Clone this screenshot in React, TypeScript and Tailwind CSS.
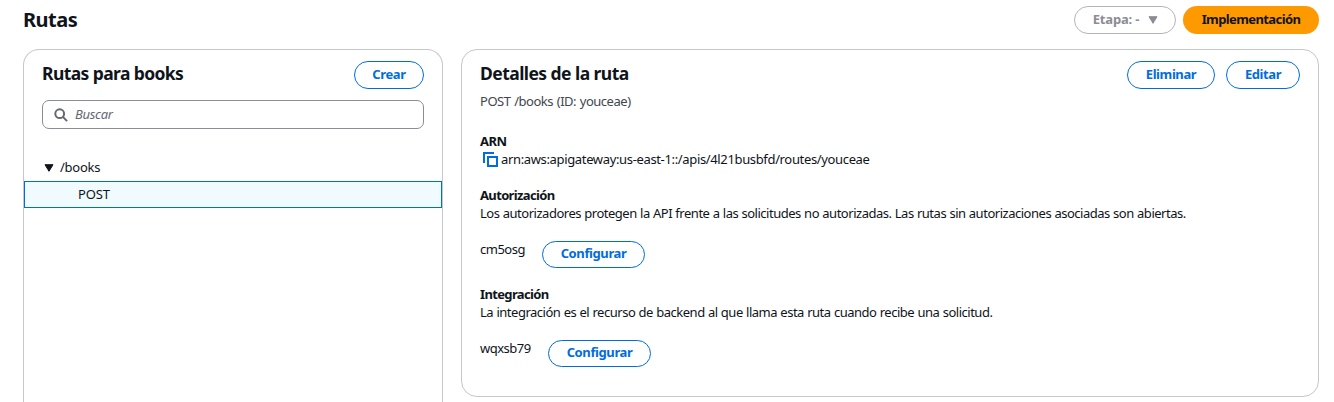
import type { ReactNode } from "react";

function PillButton({ children, className = "" }: { children: ReactNode; className?: string }) {
  return (
    <button
      type="button"
      className={`flex shrink-0 items-center justify-center rounded-full border-[1.5px] border-[#006ce0] bg-white font-bold tracking-[-0.4px] text-[#006ce0] ${className}`}
    >
      {children}
    </button>
  );
}

function Caret({ className = "" }: { className?: string }) {
  return (
    <svg viewBox="0 0 10 8" className={`shrink-0 ${className}`} fill="currentColor" stroke="currentColor" strokeWidth="1" strokeLinejoin="round">
      <path d="M1 .7h8L5 7.3z" />
    </svg>
  );
}

function TopBar() {
  return (
    <header className="flex h-[34px] items-end justify-between">
      <h1 className="text-[20px] leading-[28px] font-bold tracking-[-0.5px]">Rutas</h1>
      <div className="flex gap-[7px]">
        <button
          type="button"
          disabled
          className="flex h-7 w-[102px] items-center rounded-full border border-[#b4b4bb] bg-white pl-[17px] font-bold tracking-[-0.15px] text-[#8c8c94]"
        >
          <span className="w-[48px] pb-0.5">Etapa: -</span>
          <Caret className="ml-[8px] h-2 w-2.5" />
        </button>
        <button type="button" className="h-7 w-[136px] rounded-full bg-[#ff9900] pb-0.5 font-bold tracking-[-0.6px]">
          Implementación
        </button>
      </div>
    </header>
  );
}

function RouteTree() {
  return (
    <section className="h-[370px] w-[420px] shrink-0 rounded-t-2xl border border-b-0 border-[#c6c6cd]">
      <div className="mt-[11px] flex h-7 items-center justify-between px-[18px]">
        <h2 className="pb-1 text-[17.5px] leading-6 font-bold tracking-[-0.6px]">Rutas para books</h2>
        <PillButton className="h-7 w-[70px] pb-0.5">Crear</PillButton>
      </div>
      <div className="mx-[18px] mt-[11px] flex h-[29px] items-center rounded-[7px] border border-[#8c8c94] pl-[11px]">
        <svg viewBox="0 0 14 14" className="h-3.5 w-3.5 text-[#656871]" fill="none" stroke="currentColor" strokeWidth="2">
          <circle cx="5.7" cy="5.7" r="4.4" />
          <path d="m8.9 8.9 4.2 4.2" />
        </svg>
        <input
          type="text"
          placeholder="Buscar"
          className="ml-[7px] w-60 pb-px tracking-[-0.3px] outline-none placeholder:text-[#656871] placeholder:italic"
        />
      </div>
      <ul className="mt-[25px]">
        <li>
          <div className="flex h-[27px] items-center pl-5">
            <Caret className="h-2 w-2.5" />
            <span className="ml-[6px] pb-0.5 tracking-[-0.25px]">/books</span>
          </div>
          <ul>
            <li className="flex h-[27px] items-center border border-[#006ce0] bg-[#f0fbff] pb-0.5 pl-[53px] tracking-[-0.1px]">
              POST
            </li>
          </ul>
        </li>
      </ul>
    </section>
  );
}

function Setting({ title, text, value, gap }: { title: string; text: string; value: string; gap: string }) {
  return (
    <div className="mt-[18px] h-[81px]">
      <h3 className="font-bold tracking-[-0.65px]">{title}</h3>
      <p className="tracking-[-0.48px] [word-spacing:0.35px]">{text}</p>
      <div className="mt-[18px] flex">
        <span className={`${gap} shrink-0 tracking-[-0.5px]`}>{value}</span>
        <PillButton className="mt-px h-[27px] w-[103px] pb-[3px]">Configurar</PillButton>
      </div>
    </div>
  );
}

function RouteDetails() {
  return (
    <section className="h-[348px] w-[858px] rounded-2xl border border-[#c6c6cd] px-[18px] pt-[11px]">
      <div className="flex h-7 items-center gap-[11px]">
        <h2 className="mr-auto pb-1 text-[17.5px] leading-6 font-bold tracking-[-0.55px]">Detalles de la ruta</h2>
        <PillButton className="h-7 w-[88px] pb-0.5">Eliminar</PillButton>
        <PillButton className="h-7 w-[74px] pb-0.5">Editar</PillButton>
      </div>
      <p className="mt-[3px] tracking-[-0.48px] text-[#424650] [word-spacing:0.8px]">POST /books (ID: youceae)</p>
      <h3 className="mt-[22px] font-bold tracking-[-0.5px]">ARN</h3>
      <div className="flex items-center">
        <svg viewBox="0 0 15 15" className="ml-[3px] h-[15px] w-[15px] text-[#006ce0]" fill="none" stroke="currentColor" strokeWidth="2">
          <path d="M1 11V1h10" />
          <path d="M5 5h9v9H5z" />
        </svg>
        <span className="ml-[3px] tracking-[-0.35px]">arn:aws:apigateway:us-east-1::/apis/4l21busbfd/routes/youceae</span>
      </div>
      <Setting
        title="Autorización"
        text="Los autorizadores protegen la API frente a las solicitudes no autorizadas. Las rutas sin autorizaciones asociadas son abiertas."
        value="cm5osg"
        gap="w-[62px]"
      />
      <Setting
        title="Integración"
        text="La integración es el recurso de backend al que llama esta ruta cuando recibe una solicitud."
        value="wqxsb79"
        gap="w-[68px]"
      />
    </section>
  );
}

export default function App() {
  return (
    <div className="h-[402px] w-[1334px] overflow-hidden bg-white pl-[23px] pr-[15px] font-['Noto_Sans',sans-serif] text-[13px] leading-[18px] text-[#0f141a]">
      <TopBar />
      <main className="mt-[15px] flex items-start gap-[18px]">
        <RouteTree />
        <RouteDetails />
      </main>
    </div>
  );
}
